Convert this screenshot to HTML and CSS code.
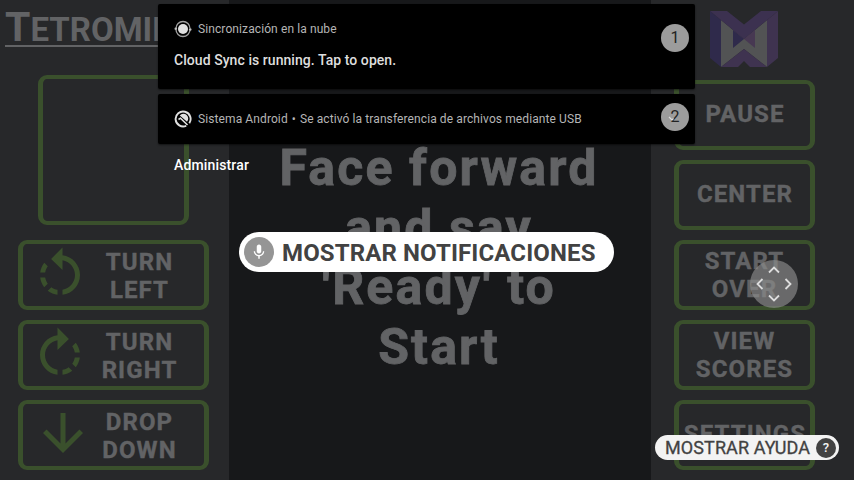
FILE: index.html
```html
<!DOCTYPE html>
<html lang="es">
<head>
<meta charset="utf-8">
<title>Tetromino</title>
<link rel="stylesheet" href="styles.css">
</head>
<body>
<main class="game">
  <section class="side left">
    <h1 class="title">T<span>etromino</span></h1>
    <div class="preview"></div>
    <div class="buttons">
      <div class="btn"><svg class="ico" viewBox="0 0 24 24"><path d="M7.11 8.53L5.7 7.11C4.8 8.27 4.24 9.61 4.07 11h2.02c.14-.87.49-1.72 1.02-2.47zM6.09 13H4.07c.17 1.39.72 2.73 1.62 3.89l1.41-1.42c-.52-.75-.87-1.59-1.01-2.47zm1.01 5.32c1.16.9 2.51 1.44 3.9 1.61V17.9c-.87-.15-1.71-.49-2.46-1.03L7.1 18.32zM13 4.07V1L8.45 5.55 13 10V6.09c2.84.48 5 2.94 5 5.91s-2.16 5.43-5 5.91v2.02c3.95-.49 7-3.85 7-7.93s-3.05-7.44-7-7.93z"/></svg><span class="label">TURN<br>LEFT</span></div>
      <div class="btn"><svg class="ico" viewBox="0 0 24 24"><path d="M15.55 5.55L11 1v3.07C7.06 4.56 4 7.92 4 12s3.05 7.44 7 7.93v-2.02c-2.84-.48-5-2.94-5-5.91s2.16-5.43 5-5.91V10l4.55-4.45zM19.93 11c-.17-1.39-.72-2.73-1.62-3.89l-1.42 1.42c.54.75.88 1.6 1.02 2.47h2.02zM13 17.9v2.02c1.39-.17 2.74-.71 3.9-1.61l-1.44-1.44c-.75.54-1.59.89-2.46 1.03zm3.89-2.42l1.42 1.41c.9-1.16 1.45-2.5 1.62-3.89h-2.02c-.14.87-.48 1.72-1.02 2.48z"/></svg><span class="label">TURN<br>RIGHT</span></div>
      <div class="btn drop"><svg class="ico" viewBox="0 0 24 24"><path d="M20 12l-1.41-1.41L13 16.17V4h-2v12.17l-5.58-5.59L4 12l8 8 8-8z"/></svg><span class="label">DROP<br>DOWN</span></div>
    </div>
  </section>
  <section class="board"><p>Face forward<br>and say<br>'Ready' to<br>Start</p></section>
  <section class="side right">
    <svg class="logo" viewBox="0 0 68 56">
      <path fill="#2f2a4b" d="M0 0L11 9V56L0 47Z"/>
      <path fill="#3f3350" d="M68 0L57 9V56L68 47Z"/>
      <path fill="#525354" d="M11 9L34 28L57 9V56L34 38L11 56Z"/>
      <path fill="#2f2a4b" d="M23 19L34 28L23 37Z"/>
      <path fill="#473852" d="M45 19L34 28L45 37Z"/>
      <path fill="#3c3150" d="M0 0H17L34 13.500L51 0H68L34 28Z"/>
      <path fill="#3f3350" d="M11 56L34 38L57 56H40L34 50L28 56Z"/>
    </svg>
    <div class="buttons">
      <div class="btn single"><span class="label">PAUSE</span></div>
      <div class="btn single"><span class="label">CENTER</span></div>
      <div class="btn"><span class="label">START<br>OVER</span></div>
      <div class="btn"><span class="label">VIEW<br>SCORES</span></div>
      <div class="btn single"><span class="label">SETTINGS</span></div>
    </div>
  </section>
</main>

<aside class="shade">
  <article class="card first">
    <div class="head"><svg class="nico" viewBox="0 0 18 18"><circle cx="9" cy="9" r="5" fill="#e0e0e0"/><path d="M2 8.500A7 7 0 0 1 16 8.500M16 9.500A7 7 0 0 1 2 9.500" fill="none" stroke="#a0a0a0" stroke-width="1.300"/><circle cx="1.800" cy="8.800" r="1.300" fill="#bdbdbd"/><circle cx="16.200" cy="9.500" r="1.300" fill="#bdbdbd"/></svg><span>Sincronización en la nube</span></div>
    <div class="text">Cloud Sync is running. Tap to open.</div>
    <b class="num">1</b>
  </article>
  <article class="card second">
    <div class="head"><svg class="nico" viewBox="0 0 18 18"><path d="M15.300 13.200A7.500 7.500 0 1 0 12.200 15.800" fill="none" stroke="#e0e0e0" stroke-width="1.900"/><path d="M5.800 5.400A4.800 4.800 0 0 1 13 11.800Z" fill="#e0e0e0"/><path d="M4.500 9.500L6.500 8.200L13.500 15" fill="none" stroke="#e0e0e0" stroke-width="1.600"/></svg><span>Sistema Android<i>•</i>Se activó la transferencia de archivos mediante USB</span></div>
    <b class="num">2<svg class="chev" viewBox="0 0 8 6"><path d="M1 1L4 4L5.500 2.500" fill="none" stroke="#ddd" stroke-width="1.200"/></svg></b>
  </article>
  <div class="manage">Administrar</div>
</aside>

<div class="voice"><span class="mic"><svg viewBox="0 0 24 24"><path d="M12 14c1.660 0 3-1.340 3-3V5c0-1.660-1.340-3-3-3S9 3.340 9 5v6c0 1.660 1.340 3 3 3zm5.300-3c0 3-2.540 5.100-5.300 5.100S6.700 14 6.700 11H5c0 3.410 2.720 6.230 6 6.720V21h2v-3.280c3.280-.480 6-3.300 6-6.720h-1.700z"/></svg></span><span class="vtext">MOSTRAR NOTIFICACIONES</span></div>
<div class="pad"><svg viewBox="0 0 48 48"><path d="M19 12.500L24 7.500L29 12.500M19 35.500L24 40.500L29 35.500M12.500 19L7.500 24L12.500 29M35.500 19L40.500 24L35.500 29"/></svg></div>
<div class="help"><span class="htext">MOSTRAR AYUDA</span><b>?</b></div>
</body>
</html>
```
FILE: styles.css
```css
* { box-sizing: border-box; }
body { margin: 0; width: 854px; height: 480px; overflow: hidden; position: relative; font-family: Roboto, "Liberation Sans", sans-serif; background: #17181a; }
.game { display: grid; grid-template-columns: 228.500px 422px 203.500px; height: 480px; color: #626365; }
.side { background: #27282a; overflow: hidden; }
.title { margin: 0 0 0 5px; width: max-content; height: 47px; border-bottom: 2px solid #626365; font-size: 41px; line-height: 54px; font-weight: 700; }
.title span { font-size: 33px; text-transform: uppercase; }
.preview { width: 151px; height: 150px; margin: 28px 0 15px 38px; border: 4px solid #3a502c; border-width: 4px 5px; border-radius: 9px; }
.buttons { display: flex; flex-direction: column; gap: 10px; }
.left .buttons { width: 191px; margin-left: 18px; }
.right .buttons { width: 141px; margin: 13px 0 0 23.500px; }
.btn { height: 70px; display: flex; align-items: center; justify-content: center; flex: none; border: 4px solid #3a502c; border-width: 4px 5px; border-radius: 9px; font-size: 24px; line-height: 28px; font-weight: 700; letter-spacing: 1.100px; text-align: center; -webkit-text-stroke: .4px #626365; }
.left .btn { justify-content: flex-start; }
.left .label { flex: 1; padding: 2px 0 0; margin-right: 16px; }
.ico { width: 60px; height: 60px; margin: 0 1px 0 7px; fill: #3a502c; flex: none; }
.drop .ico { margin: -4px -2px 0 10px; }
.right .label { white-space: nowrap; }
.single { padding-bottom: 3px; }
.single .label { padding-left: 1px; }
.board { background: #17181a; }
.board p { margin: 139px 0 0 -1px; font-size: 50px; line-height: 59.500px; font-weight: 700; letter-spacing: 2.150px; text-align: center; -webkit-text-stroke: .8px #626365; }
.logo { display: block; width: 68px; height: 56px; margin: 11px 0 0 59.500px; }
.shade { position: absolute; left: 158px; top: 4px; width: 537px; color: #b5b5b5; }
.card { position: relative; background: #000; border-radius: 2px; padding: 16px; box-shadow: 0 1px 2px #0008; }
.first { height: 85px; margin-bottom: 5px; }
.second { height: 50px; }
.head { display: flex; align-items: center; gap: 6px; height: 18px; font-size: 12px; line-height: 18px; letter-spacing: .1px; white-space: nowrap; }
.nico { width: 18px; height: 18px; flex: none; }
.head i { font-style: normal; margin: 0 4px; }
.text { margin-top: 13px; font-size: 14px; line-height: 18px; font-weight: 500; letter-spacing: .06px; color: #dedede; }
.num { position: absolute; right: 6px; top: 20px; width: 28px; height: 28px; border-radius: 50%; background: #9c9c9c; color: #222; font-size: 16px; line-height: 27px; font-weight: 400; text-align: center; }
.second .num { top: 9px; }
.chev { position: absolute; left: 7px; top: 13px; width: 8px; height: 6px; }
.manage { margin: 12px 16px; font-size: 14px; line-height: 18px; font-weight: 500; letter-spacing: .15px; color: #fff; }
.voice { position: absolute; left: 239px; top: 232px; width: 375px; height: 40px; border-radius: 20px; background: #fff; color: #424242; display: flex; align-items: center; padding-left: 5px; gap: 8px; font-size: 24px; font-weight: 700; white-space: nowrap; }
.vtext { padding-top: 1px; letter-spacing: .12px; }
.mic { width: 30px; height: 30px; border-radius: 50%; background: #959595; display: grid; place-items: center; flex: none; }
.mic svg { width: 18px; height: 18px; fill: #fff; }
.pad { position: absolute; left: 750px; top: 260px; width: 48px; height: 48px; border-radius: 50%; background: #8c8c8ca8; }
.pad svg { display: block; fill: none; stroke: #ddd; stroke-width: 1.800; }
.help { position: absolute; left: 655px; top: 435px; width: 184px; height: 25px; border-radius: 13px; background: #f3f3f3; color: #424242; display: flex; align-items: center; justify-content: space-between; padding: 0 3px 0 10px; font-size: 18px; line-height: 25px; white-space: nowrap; }
.htext { letter-spacing: .1px; -webkit-text-stroke: .3px #424242; }
.help b { width: 20px; height: 20px; border-radius: 50%; background: #424242; color: #f3f3f3; font-size: 13px; line-height: 20px; text-align: center; font-weight: 500; }
```
